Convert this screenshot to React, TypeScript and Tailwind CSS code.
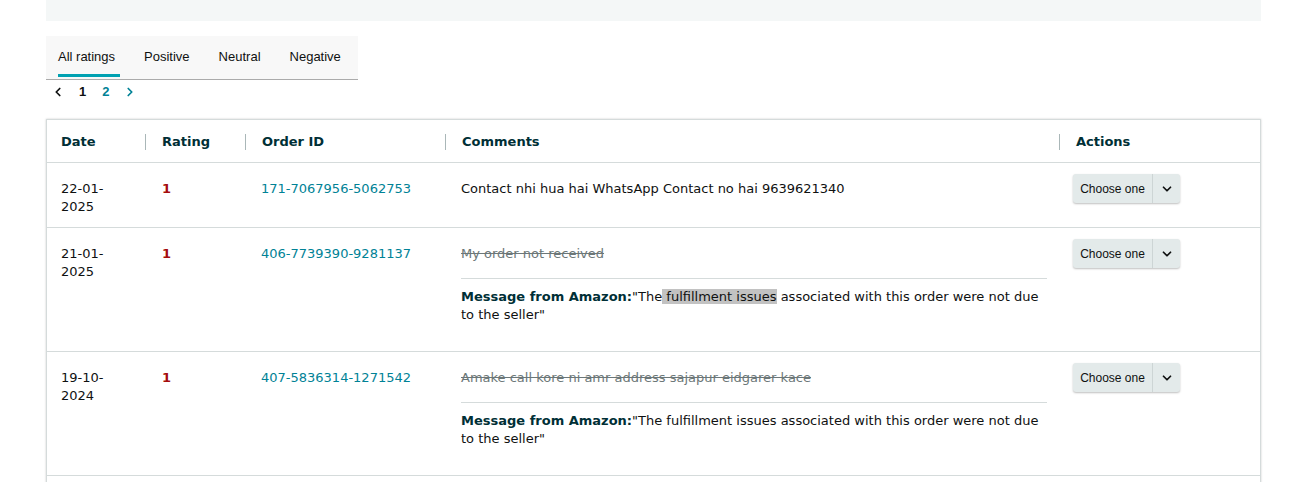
import { ChevronDown, ChevronLeft, ChevronRight } from "lucide-react";

const verdana = { fontFamily: '"DejaVu Sans", Verdana, sans-serif' };

type Row = {
  date: [string, string];
  orderId: string;
  comment: string;
  struck?: boolean;
  highlight?: boolean;
};

const rows: Row[] = [
  {
    date: ["22-01-", "2025"],
    orderId: "171-7067956-5062753",
    comment: "Contact nhi hua hai WhatsApp Contact no hai 9639621340",
  },
  {
    date: ["21-01-", "2025"],
    orderId: "406-7739390-9281137",
    comment: "My order not received",
    struck: true,
    highlight: true,
  },
  {
    date: ["19-10-", "2024"],
    orderId: "407-5836314-1271542",
    comment: "Amake call kore ni amr address sajapur eidgarer kace",
    struck: true,
  },
];

const cols = "grid grid-cols-[98px_100px_200px_614px_1fr]";

function HeaderCell({ label, sep = true }: { label: string; sep?: boolean }) {
  return (
    <div className="flex items-center h-full">
      {sep && <div className="w-px h-4 bg-[#aab7b8]" />}
      <span className={sep ? "pl-4" : "pl-[14px]"}>{label}</span>
    </div>
  );
}

function ChooseOne() {
  return (
    <div
      className="flex h-[29px] w-[107px] rounded-[3px] bg-[#e3eaea] shadow-[0_1px_2px_rgba(0,0,0,0.25)] text-[12px] text-[#0f1111]"
      style={{ fontFamily: '"Liberation Sans", Arial, sans-serif' }}
    >
      <div className="flex items-center justify-center w-[80px] border-r border-[#cdd5d5]">Choose one</div>
      <div className="flex items-center justify-center flex-1">
        <ChevronDown size={14} strokeWidth={3} />
      </div>
    </div>
  );
}

export default function App() {
  return (
    <div className="min-h-screen bg-white pl-[46px] pr-[53px] overflow-hidden">
      <div className="h-[21px] bg-[#f4f7f7]" />

      <div
        className="mt-[15px] w-[312px] bg-[#f8f8f8] border-b border-[#ababab]"
        style={{ fontFamily: '"Liberation Sans", Arial, sans-serif' }}
      >
        <div className="flex h-[43px] text-[13px] text-[#0f1111] pl-3 gap-[29px]">
          <div className="relative flex items-center">
            <span className="relative -top-px">All ratings</span>
            <div className="absolute left-0 bottom-[2px] w-[62px] h-[3px] bg-[#00a1b1]" />
          </div>
          <div className="flex items-center">
            <span className="relative -top-px">Positive</span>
          </div>
          <div className="flex items-center">
            <span className="relative -top-px">Neutral</span>
          </div>
          <div className="flex items-center">
            <span className="relative -top-px">Negative</span>
          </div>
        </div>
      </div>

      <div
        className="flex items-center h-[22px] mt-px pl-[5px] text-[13px] font-bold"
        style={{ fontFamily: '"Liberation Sans", Arial, sans-serif' }}
      >
        <ChevronLeft size={14} strokeWidth={3} className="text-[#0f1111]" />
        <span className="ml-[14px] text-[#0f1111]">1</span>
        <span className="ml-[16px] text-[#008296]">2</span>
        <ChevronRight size={14} strokeWidth={3} className="ml-[14px] text-[#008296]" />
      </div>

      <div
        className="mt-[16px] border border-[#d5dbdb] shadow-[0_0_2px_rgba(0,0,0,0.2)] text-[13px] leading-[18px] text-[#0f1111]"
        style={verdana}
      >
        <div className={`${cols} h-[43px] pt-[2px] font-bold text-[#002f36] border-b border-[#d5dbdb]`}>
          <HeaderCell label="Date" sep={false} />
          <HeaderCell label="Rating" />
          <HeaderCell label="Order ID" />
          <HeaderCell label="Comments" />
          <HeaderCell label="Actions" />
        </div>

        {rows.map((r) => (
          <div key={r.orderId} className={`${cols} border-b border-[#d5dbdb]`}>
            <div className="pl-[14px] pt-[17px] pb-[11px]">
              {r.date[0]}
              <br />
              {r.date[1]}
            </div>
            <div className="pl-[17px] pt-[17px] pb-[11px] font-bold text-[#a50d0d]">1</div>
            <div className="pl-4 pt-[17px] pb-[11px] text-[#008296]">{r.orderId}</div>
            <div className="pl-4 pr-3 pt-[17px] pb-[11px]">
              {r.struck ? (
                <>
                  <div className="line-through text-[#6c7778]">{r.comment}</div>
                  <div className="mt-[15px] border-t border-[#d5dbdb] pt-[9px] pb-[16px]">
                    <span className="font-bold text-[#002f36]">Message from Amazon:</span>
                    {'"The'}
                    {r.highlight ? (
                      <span className="bg-[#c2c2c2]"> fulfillment issues</span>
                    ) : (
                      " fulfillment issues"
                    )}
                    {' associated with this order were not due to the seller"'}
                  </div>
                </>
              ) : (
                <div>{r.comment}</div>
              )}
            </div>
            <div className="pl-[14px] pt-[11px]">
              <ChooseOne />
            </div>
          </div>
        ))}
        <div className="h-10" />
      </div>
    </div>
  );
}
